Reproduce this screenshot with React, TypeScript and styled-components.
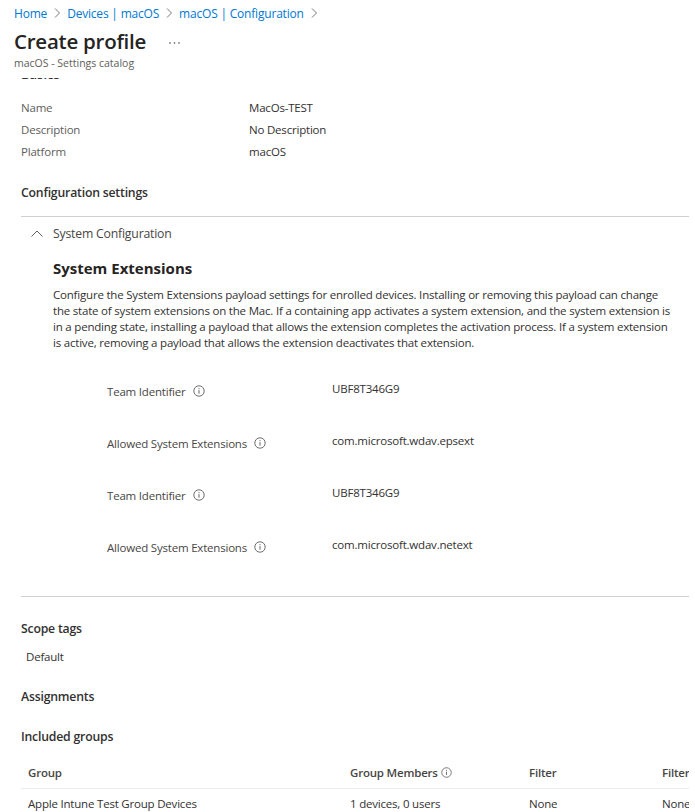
import React from "react";
import styled, { createGlobalStyle } from "styled-components";

const Global = createGlobalStyle`
  html, body { margin: 0; padding: 0; background: #fff; }
  body { font-family: "Open Sans", "Noto Sans", "Liberation Sans", sans-serif; font-size: 11.5px; color: #323130; }
  #root { width: 695px; height: 812px; overflow: hidden; }
`;

const Page = styled.div`
  width: 695px;
  height: 812px;
  display: flex;
  flex-direction: column;
  overflow: hidden;
`;

const Header = styled.header`
  flex: none;
  height: 78px;
  padding-left: 14px;
  box-sizing: border-box;
`;

const Breadcrumb = styled.nav`
  height: 26px;
  display: flex;
  align-items: center;
  font-size: 12px;
  color: #0078d4;
  letter-spacing: -0.2px;
`;

const Chevron = styled.svg`
  width: 6px;
  height: 10px;
  margin: 0 7px;
  fill: none;
  stroke: #797775;
  stroke-width: 1;
`;

const TitleRow = styled.div`
  display: flex;
  align-items: center;
  height: 30px;
`;

const Title = styled.h1`
  margin: 0;
  font-size: 20.5px;
  font-weight: 600;
  color: #252423;
  letter-spacing: -0.25px;
`;

const More = styled.svg`
  margin: 4px 0 0 23px;
  width: 11px;
  height: 2px;
  fill: #484644;
`;

const Sub = styled.div`
  font-size: 10.5px;
  line-height: 14px;
  color: #605e5c;
`;

const Scroll = styled.main`
  flex: 1;
  overflow: hidden;
  padding: 0 6px 0 21px;
`;

const ClippedHeading = styled.div`
  margin-top: -12px;
  height: 17px;
  font-size: 13px;
  font-weight: 600;
  line-height: 17px;
`;

const Summary = styled.dl`
  margin: 13px 0 0;
  display: grid;
  grid-template-columns: 228px 1fr;
  grid-auto-rows: 22px;
  align-items: center;
  letter-spacing: -0.2px;
`;

const Key = styled.dt`
  color: #605e5c;
`;
const Val = styled.dd`
  margin: 0;
  color: #323130;
`;

const SectionTitle = styled.h2<{ $top: number }>`
  margin: ${(p) => p.$top}px 0 0;
  font-size: 12.25px;
  line-height: 18px;
  font-weight: 600;
  color: #323130;
  letter-spacing: -0.2px;
`;

const Rule = styled.hr<{ $top: number }>`
  border: 0;
  border-top: 1px solid #d2d0ce;
  margin: ${(p) => p.$top}px 0 0;
`;

const AccordionHead = styled.div`
  display: flex;
  align-items: center;
  height: 33px;
  padding-left: 10px;
  gap: 10px;
  font-size: 12.25px;
  color: #484644;
  letter-spacing: -0.2px;
`;

const AccordionBody = styled.section`
  padding-left: 32px;
`;

const ExtTitle = styled.h3`
  margin: 8px 0 0;
  font-size: 15px;
  line-height: 20px;
  font-weight: 700;
  color: #252423;
`;

const Para = styled.p`
  margin: 9px 0 0;
  font-size: 11.5px;
  line-height: 16px;
  color: #323130;
  letter-spacing: -0.2px;
  width: 618px;
`;

const Settings = styled.div`
  margin-top: 14px;
  padding-left: 54px;
`;

const SettingRow = styled.div`
  height: 52px;
  display: grid;
  grid-template-columns: 225px 1fr;
  letter-spacing: -0.2px;
`;

const SettingLabel = styled.div`
  display: flex;
  align-items: center;
  gap: 7px;
  height: 52px;
  color: #484644;
`;

const SettingValue = styled.div`
  height: 46px;
  display: flex;
  align-items: center;
  color: #323130;
`;

const Info = styled.svg<{ $size?: number }>`
  width: ${(p) => p.$size ?? 12}px;
  height: ${(p) => p.$size ?? 12}px;
  flex: none;
  fill: none;
  stroke: #605e5c;
`;

const Tag = styled.div`
  margin: 11px 0 0 5px;
  line-height: 16px;
  color: #323130;
  letter-spacing: -0.2px;
`;

const Table = styled.div`
  margin-top: 11px;
  width: 668px;
  overflow: hidden;
`;

const TableRow = styled.div<{ $head?: boolean }>`
  display: grid;
  grid-template-columns: 322px 179px 133px 80px;
  height: ${(p) => (p.$head ? 31 : 29)}px;
  padding-left: 7px;
  width: 730px;
  align-items: center;
  border-bottom: ${(p) => (p.$head ? "1px solid #edebe9" : "0")};
  font-weight: ${(p) => (p.$head ? 600 : 400)};
  color: ${(p) => (p.$head ? "#484644" : "#323130")};
  letter-spacing: -0.2px;
`;

const HeadCell = styled.div`
  display: flex;
  align-items: center;
  gap: 3px;
`;

const Sep = () => (
  <Chevron viewBox="0 0 6 10" aria-hidden>
    <path d="M1 .5 5.5 5 1 9.5" />
  </Chevron>
);

const InfoIcon = ({ size }: { size?: number }) => (
  <Info $size={size} viewBox="0 0 12 12" aria-hidden>
    <circle cx="6" cy="6" r="5.2" strokeWidth="0.9" />
    <path d="M6 5.2v3.4M6 3.2v1" strokeWidth="1" />
  </Info>
);

const settings = [
  ["Team Identifier", "UBF8T346G9"],
  ["Allowed System Extensions", "com.microsoft.wdav.epsext"],
  ["Team Identifier", "UBF8T346G9"],
  ["Allowed System Extensions", "com.microsoft.wdav.netext"],
];

export default function App() {
  return (
    <Page>
      <Global />
      <Header>
        <Breadcrumb>
          Home<Sep />Devices | macOS<Sep />macOS | Configuration<Sep />
        </Breadcrumb>
        <TitleRow>
          <Title>Create profile</Title>
          <More viewBox="0 0 11 2" aria-hidden>
            <circle cx="1" cy="1" r="0.8" />
            <circle cx="5.5" cy="1" r="0.8" />
            <circle cx="10" cy="1" r="0.8" />
          </More>
        </TitleRow>
        <Sub>macOS - Settings catalog</Sub>
      </Header>
      <Scroll>
        <ClippedHeading>Basics</ClippedHeading>
        <Summary>
          <Key>Name</Key><Val>MacOs-TEST</Val>
          <Key>Description</Key><Val>No Description</Val>
          <Key>Platform</Key><Val>macOS</Val>
        </Summary>
        <SectionTitle $top={22}>Configuration settings</SectionTitle>
        <Rule $top={14} />
        <AccordionHead>
          <svg width="12" height="7" viewBox="0 0 12 7" fill="none" stroke="#605e5c" aria-hidden>
            <path d="M.5 6.5 6 1l5.5 5.5" />
          </svg>
          System Configuration
        </AccordionHead>
        <AccordionBody>
          <ExtTitle>System Extensions</ExtTitle>
          <Para>
            Configure the System Extensions payload settings for enrolled devices. Installing or removing this payload can change the state of system extensions on the Mac. If a containing app activates a system extension, and the system extension is in a pending state, installing a payload that allows the extension completes the activation process. If a system extension is active, removing a payload that allows the extension deactivates that extension.
          </Para>
          <Settings>
            {settings.map(([k, v], i) => (
              <SettingRow key={i}>
                <SettingLabel>{k}<InfoIcon /></SettingLabel>
                <SettingValue>{v}</SettingValue>
              </SettingRow>
            ))}
          </Settings>
        </AccordionBody>
        <Rule $top={23} />
        <SectionTitle $top={23}>Scope tags</SectionTitle>
        <Tag>Default</Tag>
        <SectionTitle $top={23}>Assignments</SectionTitle>
        <SectionTitle $top={22}>Included groups</SectionTitle>
        <Table>
          <TableRow $head>
            <HeadCell>Group</HeadCell>
            <HeadCell>Group Members<InfoIcon size={11} /></HeadCell>
            <HeadCell>Filter</HeadCell>
            <HeadCell>Filter mode</HeadCell>
          </TableRow>
          <TableRow>
            <div>Apple Intune Test Group Devices</div>
            <div>1 devices, 0 users</div>
            <div>None</div>
            <div>None</div>
          </TableRow>
        </Table>
      </Scroll>
    </Page>
  );
}
